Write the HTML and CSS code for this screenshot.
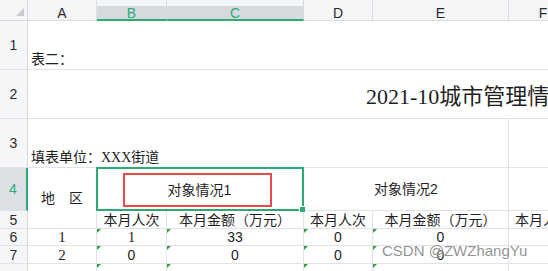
FILE: index.html
```html
<!DOCTYPE html>
<html lang="zh-CN">
<head>
  <meta charset="UTF-8" />
  <title>表二</title>
  <link rel="stylesheet" href="styles.css">
</head>
<body>
  <div class="sheet">
    <!-- column headers -->
    <div class="col-head corner"><span class="corner-mark"></span></div>
    <div class="col-head">A</div>
    <div class="col-head picked">B</div>
    <div class="col-head picked">C</div>
    <div class="col-head">D</div>
    <div class="col-head">E</div>
    <div class="col-head">F</div>

    <!-- row 1 -->
    <div class="row-head">1</div>
    <div class="cell span-6 bottom-left">表二：</div>

    <!-- row 2 -->
    <div class="row-head">2</div>
    <div class="cell span-6 title">2021-10城市管理情况统计表</div>

    <!-- row 3 -->
    <div class="row-head">3</div>
    <div class="cell span-5 bottom-left">填表单位：XXX街道</div>
    <div class="cell"></div>

    <!-- row 4 -->
    <div class="row-head picked">4</div>
    <div class="cell rows-2 center">地　区</div>
    <div class="cell span-2 center sel">
      <span class="mark">对象情况1</span>
    </div>
    <div class="cell span-2 center">对象情况2</div>
    <div class="cell"></div>

    <!-- row 5 -->
    <div class="row-head">5</div>
    <div class="cell center">本月人次</div>
    <div class="cell center">本月金额（万元）</div>
    <div class="cell center">本月人次</div>
    <div class="cell center">本月金额（万元）</div>
    <div class="cell center">本月人次</div>

    <!-- row 6 -->
    <div class="row-head">6</div>
    <div class="cell center serif">1</div>
    <div class="cell center serif txt">1</div>
    <div class="cell center txt">33</div>
    <div class="cell center txt">0</div>
    <div class="cell center txt">0</div>
    <div class="cell"></div>

    <!-- row 7 -->
    <div class="row-head">7</div>
    <div class="cell center serif">2</div>
    <div class="cell center txt">0</div>
    <div class="cell center txt">0</div>
    <div class="cell center txt">0</div>
    <div class="cell center txt">0</div>
    <div class="cell"></div>

    <!-- row 8 -->
    <div class="row-head"></div>
    <div class="cell"></div>
    <div class="cell txt"></div>
    <div class="cell txt"></div>
    <div class="cell txt"></div>
    <div class="cell txt"></div>
    <div class="cell"></div>
  </div>

  <div class="watermark">CSDN @ZWZhangYu</div>
</body>
</html>
```

FILE: styles.css
```css
html, body {
  margin: 0;
  padding: 0;
  width: 100%;
  height: 100%;
  background: #ffffff;
  overflow: hidden;
  font-family: "Liberation Serif", "Noto Sans CJK SC", serif;
  color: #1f1f1f;
}

.sheet {
  display: grid;
  grid-template-columns: 28px 69px 70px 137px 69px 136px 69px;
  grid-template-rows: 21px 49px 49px 49px 43px 18px 17px 18px 18px;
  width: 578px;
}

.sheet > div {
  box-sizing: border-box;
  min-width: 0;
}

/* headers */
.col-head {
  display: flex;
  align-items: center;
  justify-content: center;
  padding-top: 6px;
  background: #f5f6f8;
  border-bottom: 1px solid #d9dadf;
  border-right: 1px solid #dcdde2;
  font-family: "Liberation Sans", Arial, sans-serif;
  font-size: 14px;
  color: #2b2b2b;
}

.col-head.picked {
  background: linear-gradient(to bottom, #f5f6f8 6px, #d6d9de 6px);
  border-bottom: 2px solid #2bab74;
  border-right-color: #d6d9de;
  color: #2bab74;
}

.col-head.corner {
  position: relative;
  border-right: 1px solid #d9dadf;
}

.corner-mark {
  position: absolute;
  right: 3px;
  bottom: 4px;
  width: 0;
  height: 0;
  border-left: 8px solid transparent;
  border-bottom: 8px solid #c9cbd0;
}

.row-head {
  display: flex;
  align-items: center;
  justify-content: center;
  background: #f5f6f8;
  border-right: 1px solid #d9dadf;
  border-bottom: 1px solid #e2e3e8;
  font-family: "Liberation Sans", Arial, sans-serif;
  font-size: 14px;
  color: #2b2b2b;
}

.row-head.picked {
  background: #dcdfe4;
  border-right: 2px solid #2bab74;
  color: #2bab74;
}

/* cells */
.cell {
  display: flex;
  border-right: 1px solid #e1e2e8;
  border-bottom: 1px solid #e1e2e8;
  font-size: 14px;
  white-space: nowrap;
  position: relative;
}

.span-6 { grid-column: span 6; border-right: none; }
.span-5 { grid-column: span 5; }
.span-2 { grid-column: span 2; }
.rows-2 { grid-row: span 2; }

.bottom-left {
  align-items: flex-end;
  padding: 0 0 1px 3px;
  line-height: 16px;
}

.title {
  align-items: center;
  padding-left: 338px;
  font-size: 22px;
  overflow: hidden;
}

.center {
  align-items: center;
  justify-content: center;
  font-family: "Liberation Sans", "Noto Sans CJK SC", sans-serif;
  line-height: 16px;
}

.center.serif {
  font-family: "Liberation Serif", "Noto Sans CJK SC", serif;
  font-size: 15px;
}

/* selected range B4:C4 */
.sel::after {
  content: "";
  position: absolute;
  top: -1px;
  left: -1px;
  right: -1px;
  bottom: -1px;
  border: 2px solid #2bab74;
}

.sel::before {
  content: "";
  position: absolute;
  right: -3px;
  bottom: -3px;
  width: 5px;
  height: 5px;
  background: #2bab74;
  border: 1px solid #ffffff;
  z-index: 2;
}

.mark {
  display: flex;
  align-items: center;
  justify-content: center;
  box-sizing: border-box;
  width: 149px;
  height: 34px;
  margin: 1px 6px 0 0;
  padding-left: 5px;
  border: 2px solid #ef4848;
}

/* number-stored-as-text flag */
.txt::before {
  content: "";
  position: absolute;
  top: 0;
  left: 0;
  width: 0;
  height: 0;
  border-top: 4px solid #2e9e3e;
  border-right: 4px solid transparent;
}

.watermark {
  position: absolute;
  left: 382px;
  top: 242px;
  font-family: "Liberation Sans", Arial, sans-serif;
  font-size: 15px;
  color: rgba(110, 110, 110, 0.75);
  text-shadow: 0 0 2px #ffffff;
}
```
